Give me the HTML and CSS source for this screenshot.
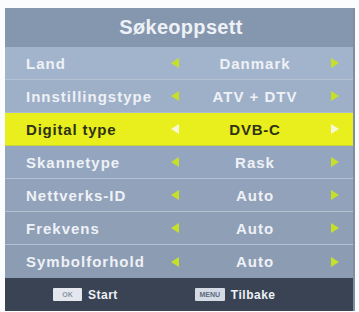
FILE: index.html
```html
<!DOCTYPE html>
<html>
<head>
<meta charset="utf-8">
<link rel="stylesheet" href="styles.css">
</head>
<body>
<div class="panel">
  <div class="header">Søkeoppsett</div>
  <div class="list">
    <div class="row r1"><span class="label">Land</span><span class="arr left"></span><span class="value">Danmark</span><span class="arr right"></span></div>
    <div class="row r2"><span class="label">Innstillingstype</span><span class="arr left"></span><span class="value">ATV + DTV</span><span class="arr right"></span></div>
    <div class="row sel"><span class="label">Digital type</span><span class="arr left"></span><span class="value">DVB-C</span><span class="arr right"></span></div>
    <div class="row r4"><span class="label">Skannetype</span><span class="arr left"></span><span class="value">Rask</span><span class="arr right"></span></div>
    <div class="row r5"><span class="label">Nettverks-ID</span><span class="arr left"></span><span class="value">Auto</span><span class="arr right"></span></div>
    <div class="row r6"><span class="label">Frekvens</span><span class="arr left"></span><span class="value">Auto</span><span class="arr right"></span></div>
    <div class="row r7 last"><span class="label">Symbolforhold</span><span class="arr left"></span><span class="value">Auto</span><span class="arr right"></span></div>
  </div>
  <div class="footer">
    <div class="hint ok"><span class="key">OK</span><span>Start</span></div>
    <div class="hint menu"><span class="key">MENU</span><span>Tilbake</span></div>
  </div>
</div>
</body>
</html>
```
FILE: styles.css
```css
html, body {
  margin: 0;
  padding: 0;
  background: #fbfcfd;
}
body {
  font-family: "Liberation Sans", Arial, sans-serif;
}
.panel {
  margin: 8px 0 0 5px;
  width: 350px;
  border-right: 2px solid #7f8ea3;
  box-sizing: border-box;
}
.header {
  height: 39px;
  background: #8597ae;
  color: #eef1f6;
  font-size: 20px;
  font-weight: bold;
  letter-spacing: 0.3px;
  display: flex;
  align-items: center;
  justify-content: center;
  padding-left: 4px;
}
.list {
  display: flex;
  flex-direction: column;
}
.row {
  height: 32px;
  border-bottom: 1px solid #b3c1d3;
  display: grid;
  grid-template-columns: 160px 20px 140px 20px;
  align-items: center;
  color: #eef1f6;
  font-size: 15px;
  font-weight: bold;
  letter-spacing: 1px;
}
.row.last { border-bottom: none; height: 33px; }
.r1 { background: #a2b4cc; }
.r2 { background: #9eb0c8; border-bottom-color: #aebcd0; }
.sel { background: #e9ef1c; color: #2f3212; border-bottom-color: #c9d23a; font-weight: 600; letter-spacing: 0.8px; }
.r4 { background: #94a6bf; }
.r5 { background: #91a2ba; }
.r6 { background: #8e9fb6; }
.r7 { background: #8c9cb3; }
.label {
  padding-left: 21px;
  white-space: nowrap;
}
.value {
  text-align: center;
}
.arr {
  display: flex;
  justify-content: center;
}
.arr::before {
  content: "";
  width: 0;
  height: 0;
  border-top: 5px solid transparent;
  border-bottom: 5px solid transparent;
}
.arr.left::before { border-right: 8px solid #c6e02a; }
.arr.right::before { border-left: 8px solid #c6e02a; }
.sel .arr.left::before { border-right-color: #f6f8d8; }
.sel .arr.right::before { border-left-color: #f6f8d8; }
.footer {
  height: 33px;
  background: #3a4354;
  display: flex;
  align-items: center;
  color: #eef1f6;
  font-size: 12px;
  font-weight: bold;
  letter-spacing: 0.5px;
}
.hint {
  display: flex;
  align-items: center;
  gap: 6px;
}
.ok { margin-left: 48px; }
.menu { margin-left: 77px; }
.key {
  background: #e4e8ee;
  color: #8a93a3;
  font-size: 7px;
  letter-spacing: 0;
  height: 13px;
  width: 29px;
  display: flex;
  align-items: center;
  justify-content: center;
  border-radius: 1px;
}
.menu .key { width: 30px; background: #d5dbe5; color: #5d6a80; }
```
